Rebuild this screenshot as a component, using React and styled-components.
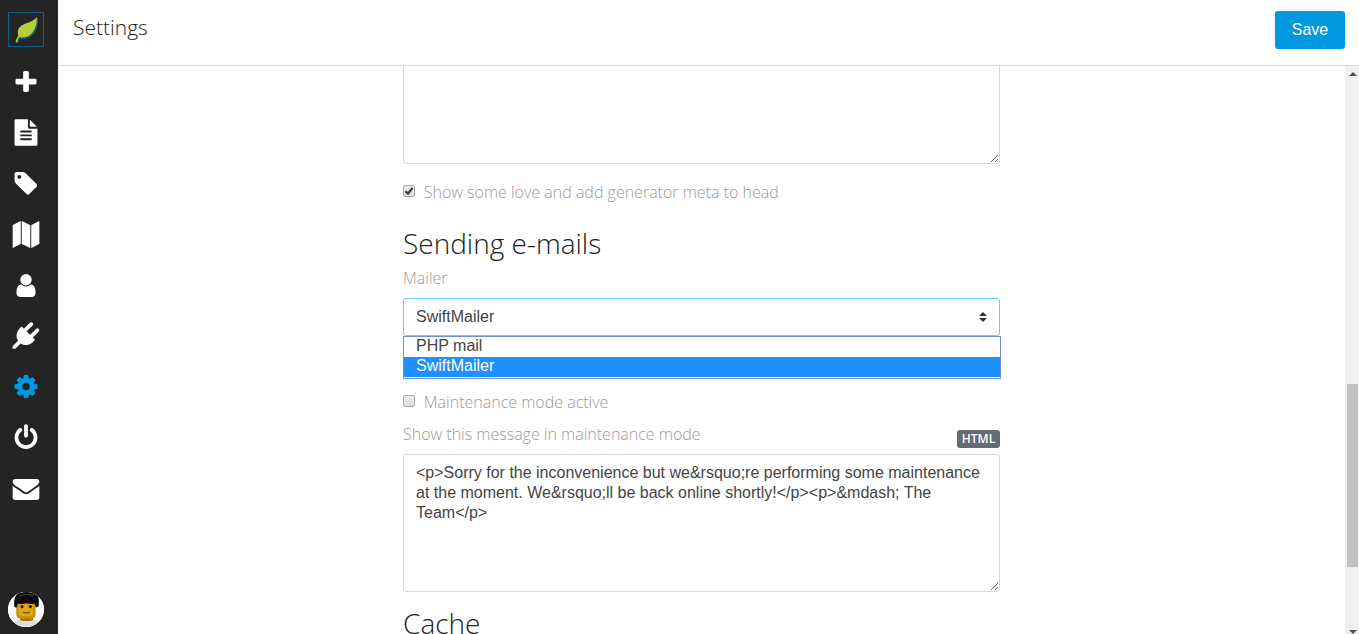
import React from "react";
import styled, { createGlobalStyle } from "styled-components";

const GlobalStyle = createGlobalStyle`
  * { box-sizing: border-box; }
  body { margin: 0; background: #fff; overflow: hidden; }
`;

const light = `font-family: "Open Sans", sans-serif; font-weight: 300;`;
const arial = `font-family: "Liberation Sans", Arial, sans-serif;`;

const Page = styled.div`
  display: flex;
  height: 100vh;
  overflow: hidden;
`;

const Sidebar = styled.nav`
  display: flex;
  flex-direction: column;
  align-items: flex-start;
  width: 58px;
  flex: none;
  padding: 12px 8px 7px;
  background: #242424;
`;

const Logo = styled.a`
  display: flex;
  width: 36px;
  height: 35px;
  border: 1px solid #0d5f87;
  margin-bottom: 21.6px;
`;

const Menu = styled.ul`
  display: flex;
  flex-direction: column;
  gap: 23.77px;
  list-style: none;
  margin: 0;
  padding: 0 0 0 4px;
`;

const MenuItem = styled.li`
  display: flex;
  height: 27px;
  color: ${(p) => (p.$active ? "#0099e0" : "#fff")};
`;

const Glyph = styled.svg`
  width: 28px;
  height: 27px;
  fill: currentColor;
`;

const Avatar = styled.div`
  width: 36px;
  height: 35px;
  margin-top: auto;
  border-radius: 50%;
  overflow: hidden;
  background: #fff;
  svg { display: block; }
`;

const Main = styled.div`
  display: flex;
  flex-direction: column;
  flex: 1;
  min-width: 0;
`;

const Header = styled.header`
  display: flex;
  justify-content: space-between;
  align-items: flex-start;
  height: 66px;
  flex: none;
  padding: 11px 14px 0 15px;
  border-bottom: 1px solid #dadada;
`;

const Title = styled.h1`
  ${light}
  margin: 0;
  font-size: 21px;
  line-height: 33px;
  color: #222;
`;

const SaveButton = styled.button`
  ${arial}
  width: 70px;
  height: 38px;
  padding: 0;
  border: 0;
  border-radius: 3px;
  background: #0099e0;
  color: #fff;
  font-size: 16px;
  line-height: 20px;
`;

const Viewport = styled.div`
  display: flex;
  flex: 1;
  min-height: 0;
`;

const Content = styled.div`
  display: flex;
  flex: 1;
  justify-content: center;
  overflow: hidden;
`;

const Form = styled.form`
  display: flex;
  flex-direction: column;
  width: 597px;
  height: 568px;
`;

const TextArea = styled.textarea`
  ${arial}
  display: block;
  flex: none;
  width: 100%;
  height: ${(p) => p.$height}px;
  margin-top: ${(p) => p.$offset || 0}px;
  padding: 8px 12px;
  border: 1px solid #d9d9d9;
  border-radius: 3px;
  background: #fff;
  color: #444;
  font-size: 16px;
  line-height: 20px;
  outline: 0;
  overflow: hidden;
  resize: vertical;
`;

const CheckRow = styled.label`
  ${light}
  display: flex;
  align-items: center;
  flex: none;
  gap: 8.8px;
  height: 24px;
  margin-top: ${(p) => p.$offset}px;
  font-size: 16px;
  line-height: 24px;
  color: #999;
`;

const Box = styled.span`
  display: flex;
  width: 12px;
  height: 12px;
  margin-bottom: 2px;
  border: 1px solid #aaa;
  border-radius: 2px;
  background: linear-gradient(#eee, #dcdcdc);
`;

const Heading = styled.h2`
  ${light}
  flex: none;
  margin: ${(p) => p.$offset}px 0 0;
  font-size: 28px;
  line-height: 32px;
  color: #222;
`;

const Label = styled.label`
  ${light}
  font-size: 16px;
  line-height: 24px;
  color: #999;
`;

const MailerLabel = styled(Label)`
  flex: none;
  margin: 7px 0 8px;
`;

const SelectWrap = styled.div`
  position: relative;
  flex: none;
`;

const Select = styled.div`
  ${arial}
  display: flex;
  align-items: center;
  justify-content: space-between;
  height: 38px;
  padding: 0 12px;
  border: 1px solid #66ccff;
  border-radius: 3px;
  font-size: 16px;
  line-height: 20px;
  color: #444;
`;

const Options = styled.ul`
  ${arial}
  position: absolute;
  top: 38px;
  left: 0;
  width: 598px;
  height: 43px;
  margin: 0;
  padding: 0;
  list-style: none;
  border: 1px solid #6d94d2;
  background: #fff;
  font-size: 16px;
`;

const Option = styled.li`
  height: 20px;
  padding-left: 12px;
  line-height: 18px;
  color: ${(p) => (p.$active ? "#fff" : "#444")};
  background: ${(p) => (p.$active ? "#1e90ff" : "#fff")};
`;

const LabelRow = styled.div`
  display: flex;
  justify-content: space-between;
  align-items: flex-start;
  flex: none;
  height: 32px;
  margin-top: 8px;
`;

const Badge = styled.span`
  font-family: "Open Sans", sans-serif;
  width: 43px;
  height: 18px;
  margin-top: 8px;
  border-radius: 3px;
  background: #636c72;
  color: #fff;
  font-size: 12px;
  font-weight: 600;
  line-height: 18px;
  text-align: center;
`;

const ScrollTrack = styled.div`
  display: flex;
  flex-direction: column;
  align-items: center;
  width: 14px;
  padding: 6px 0 0 1px;
  background: #f0f0f0;
`;

const ScrollThumb = styled.div`
  width: 11px;
  height: 183px;
  margin-top: 308px;
  margin-bottom: 63px;
  background: #c1c1c1;
`;

const Arrow = styled.svg`
  display: block;
  flex: none;
`;

const icons = [
  ["plus", "M1600 736v192q0 40-28 68t-68 28h-416v416q0 40-28 68t-68 28h-192q-40 0-68-28t-28-68v-416h-416q-40 0-68-28t-28-68v-192q0-40 28-68t68-28h416v-416q0-40 28-68t68-28h192q40 0 68 28t28 68v416h416q40 0 68 28t28 68z"],
  ["page", "M1596 476q14 14 28 36h-472v-472q22 14 36 28zm-476 164h544v1056q0 40-28 68t-68 28h-1344q-40 0-68-28t-28-68v-1600q0-40 28-68t68-28h800v544q0 40 28 68t68 28zm160 736v-64q0-14-9-23t-23-9h-704q-14 0-23 9t-9 23v64q0 14 9 23t23 9h704q14 0 23-9t9-23zm0-256v-64q0-14-9-23t-23-9h-704q-14 0-23 9t-9 23v64q0 14 9 23t23 9h704q14 0 23-9t9-23zm0-256v-64q0-14-9-23t-23-9h-704q-14 0-23 9t-9 23v64q0 14 9 23t23 9h704q14 0 23-9t9-23z"],
  ["tag", "M576 448q0-53-37.5-90.5t-90.5-37.5-90.5 37.5-37.5 90.5 37.5 90.5 90.5 37.5 90.5-37.5 37.5-90.5zm1067 576q0 53-37 90l-491 492q-39 37-91 37-53 0-90-37l-715-716q-38-37-64.5-101t-26.5-117v-416q0-52 38-90t90-38h416q53 0 117 26.5t102 64.5l715 714q37 39 37 91z"],
  ["map", "M512 0q13 0 22.5 9.5t9.5 22.5v1472q0 20-17 28l-480 256q-7 4-15 4-13 0-22.500-9.500t-9.500-22.500v-1472q0-20 17-28l480-256q7-4 15-4zm1248 0q13 0 22.500 9.500t9.500 22.500v1472q0 20-17 28l-480 256q-7 4-15 4-13 0-22.500-9.500t-9.500-22.500v-1472q0-20 17-28l480-256q7-4 15-4zm-1120 0q8 0 14 3l512 256q18 10 18 29v1472q0 13-9.500 22.500t-22.500 9.500q-8 0-14-3l-512-256q-18-10-18-29v-1472q0-13 9.500-22.500t22.500-9.500z"],
  ["user", "M1536 1399q0 109-62.5 187t-150.5 78h-854q-88 0-150.500-78t-62.500-187q0-85 8.500-160.500t31.500-152 58.500-131 94-89 134.500-34.500q131 128 313 128t313-128q76 0 134.500 34.500t94 89 58.500 131 31.500 152 8.500 160.500zm-256-887q0 159-112.500 271.500t-271.500 112.500-271.500-112.500-112.500-271.500 112.500-271.500 271.500-112.500 271.500 112.500 112.500 271.500z"],
  ["plug", "M1755 453q37 38 37 90.500t-37 90.500l-401 400 150 150-160 160q-163 163-389.500 186.500t-411.500-100.500l-362 362h-181v-181l362-362q-124-185-100.500-411.500t186.500-389.500l160-160 150 150 400-401q38-37 91-37t90 37 37 90.500-37 90.500l-400 401 234 234 401-400q38-37 91-37t90 37z"],
  ["cog", "M1152 896q0-106-75-181t-181-75-181 75-75 181 75 181 181 75 181-75 75-181zm512-109v222q0 12-8 23t-20 13l-185 28q-19 54-39 91 35 50 107 138 10 12 10 25t-9 23q-27 37-99 108t-94 71q-12 0-26-9l-138-108q-44 23-91 38-16 136-29 186-7 28-36 28h-222q-14 0-24.500-8.500t-11.500-21.500l-28-184q-49-16-90-37l-141 107q-10 9-25 9-14 0-25-11-126-114-165-168-7-10-7-23 0-12 8-23 15-21 51-66.500t54-70.500q-27-50-41-99l-183-27q-13-2-21-12.500t-8-23.500v-222q0-12 8-23t19-13l186-28q14-46 39-92-40-57-107-138-10-12-10-24 0-10 9-23 26-36 98.500-107.500t94.500-71.500q13 0 26 10l138 107q44-23 91-38 16-136 29-186 7-28 36-28h222q14 0 24.500 8.500t11.500 21.500l28 184q49 16 90 37l142-107q9-9 24-9 13 0 25 10 129 119 165 170 7 8 7 22 0 12-8 23-15 21-51 66.500t-54 70.500q26 50 41 98l183 28q13 2 21 12.500t8 23.500z"],
  ["power", "M1664 896q0 156-61 298t-164 245-245 164-298 61-298-61-245-164-164-245-61-298q0-182 80.500-343t226.500-270q43-32 95.500-25t83.500 50q32 42 24.500 94.500t-49.500 84.500q-98 74-151.500 181t-53.500 228q0 104 40.500 198.500t109.500 163.500 163.500 109.500 198.500 40.500 198.500-40.500 163.500-109.500 109.500-163.500 40.500-198.500q0-121-53.500-228t-151.500-181q-42-32-49.500-84.500t24.500-94.500q31-43 84-50t95 25q146 109 226.500 270t80.500 343zm-640-768v640q0 52-38 90t-90 38-90-38-38-90v-640q0-52 38-90t90-38 90 38 38 90z"],
  ["mail", "M1792 710v794q0 66-47 113t-113 47h-1472q-66 0-113-47t-47-113v-794q44 49 101 87 362 246 497 345 57 42 92.500 65.500t94.500 48 110 24.500h2q51 0 110-24.500t94.500-48 92.500-65.500q170-123 498-345 57-39 100-87zm0-294q0 79-49 151t-122 123q-376 261-468 325-10 7-42.500 31t-54 38.500-52 32.500-57.500 27-50 9h-2q-23 0-50-9t-57.500-27-52-32.500-54-38.500-42.500-31q-91-64-262-182.500t-205-142.500q-62-42-117-115.500t-55-136.500q0-78 41.500-130t118.500-52h1472q65 0 112.500 47t47.500 113z"],
];

const Leaf = () => (
  <svg width="34" height="33" viewBox="0 0 34 33">
    <path d="M28.300 5C28.500 14 25.500 21.500 19 24.600C15.500 26 12.500 25.700 10.300 25L8.800 29.800" fill="none" stroke="#12607c" strokeWidth="1.500" />
    <path d="M27.800 3.800C28.300 12 25.500 20 19.300 23.300C16 25 12.500 24.800 10.300 24C9.200 25.500 8.600 27.500 8.200 29.600L6.500 29.200C7 26.500 8 24.600 9.300 22.800C7.200 15 12.500 11.800 18 10C22 8.700 26 7 27.800 3.800Z" fill="#b3ce3e" />
  </svg>
);

const Minifig = () => (
  <svg width="36" height="36" viewBox="0 0 36 36">
    <rect width="36" height="36" fill="#fbfbfb" />
    <path d="M6 31C8 27.500 11 27 18 27S28 27.500 31 31L29 36H7Z" fill="#dcdde0" />
    <path d="M12 24H25V28.200Q18.500 30 12 28.200Z" fill="#a87508" />
    <path d="M8.300 9H27.500V22Q27.500 26.500 23 26.500H13Q8.300 26.500 8.300 22Z" fill="#c99009" />
    <path d="M10.500 10H25V23Q18 25.500 10.500 23Z" fill="#e0a812" />
    <path d="M6.500 15C5.500 9 6.500 3.500 11 1C17-1 25-.8 28.500 2C31.500 5 31 10.500 30.500 14.500L27.800 15.500L26.800 11.500C24 12.400 21 12 18.500 11.200C15.500 12.400 12 12 10 11.400L8.500 15.800Z" fill="#0b0b0b" />
    <path d="M11 4.200Q18 1 26 3.300" stroke="#454545" strokeWidth="1" fill="none" />
    <circle cx="14" cy="14.600" r="1.600" fill="#292009" />
    <circle cx="22.400" cy="14.600" r="1.600" fill="#292009" />
    <path d="M15 20.200Q18.500 21.800 22 20" stroke="#60410a" strokeWidth="1.200" fill="none" />
  </svg>
);

const message =
  "<p>Sorry for the inconvenience but we&rsquo;re performing some maintenance at the moment. We&rsquo;ll be back online shortly!</p><p>&mdash; The Team</p>";

export default function App() {
  return (
    <Page>
      <GlobalStyle />
      <Sidebar>
        <Logo><Leaf /></Logo>
        <Menu>
          {icons.map(([name, d]) => (
            <MenuItem key={name} $active={name === "cog"}>
              <Glyph viewBox="-10 -10 1812 1812"><path d={d} /></Glyph>
            </MenuItem>
          ))}
        </Menu>
        <Avatar><Minifig /></Avatar>
      </Sidebar>
      <Main>
        <Header>
          <Title>Settings</Title>
          <SaveButton>Save</SaveButton>
        </Header>
        <Viewport>
          <Content>
            <Form>
              <TextArea $height={138} $offset={-40} readOnly />
              <CheckRow $offset={16}>
                <Box>
                  <svg width="10" height="10" viewBox="0 0 10 10">
                    <path d="M1.500 5.200L4 7.600L8.500 1.800" fill="none" stroke="#333" strokeWidth="2.200" />
                  </svg>
                </Box>
                Show some love and add generator meta to head
              </CheckRow>
              <Heading $offset={23}>Sending e-mails</Heading>
              <MailerLabel>Mailer</MailerLabel>
              <SelectWrap>
                <Select>
                  SwiftMailer
                  <svg width="8" height="10" viewBox="0 0 8 10">
                    <path d="M4 0L8 4H0ZM0 6H8L4 10Z" fill="#333" />
                  </svg>
                </Select>
                <Options>
                  <Option>PHP mail</Option>
                  <Option $active>SwiftMailer</Option>
                </Options>
              </SelectWrap>
              <CheckRow $offset={54}>
                <Box />
                Maintenance mode active
              </CheckRow>
              <LabelRow>
                <Label>Show this message in maintenance mode</Label>
                <Badge>HTML</Badge>
              </LabelRow>
              <TextArea $height={138} readOnly value={message} />
              <Heading $offset={15}>Cache</Heading>
            </Form>
          </Content>
          <ScrollTrack>
            <Arrow width="8" height="4" viewBox="0 0 8 4"><path d="M4 0L8 4H0Z" fill="#505050" /></Arrow>
            <ScrollThumb />
            <Arrow width="8" height="4" viewBox="0 0 8 4"><path d="M0 0H8L4 4Z" fill="#505050" /></Arrow>
          </ScrollTrack>
        </Viewport>
      </Main>
    </Page>
  );
}
